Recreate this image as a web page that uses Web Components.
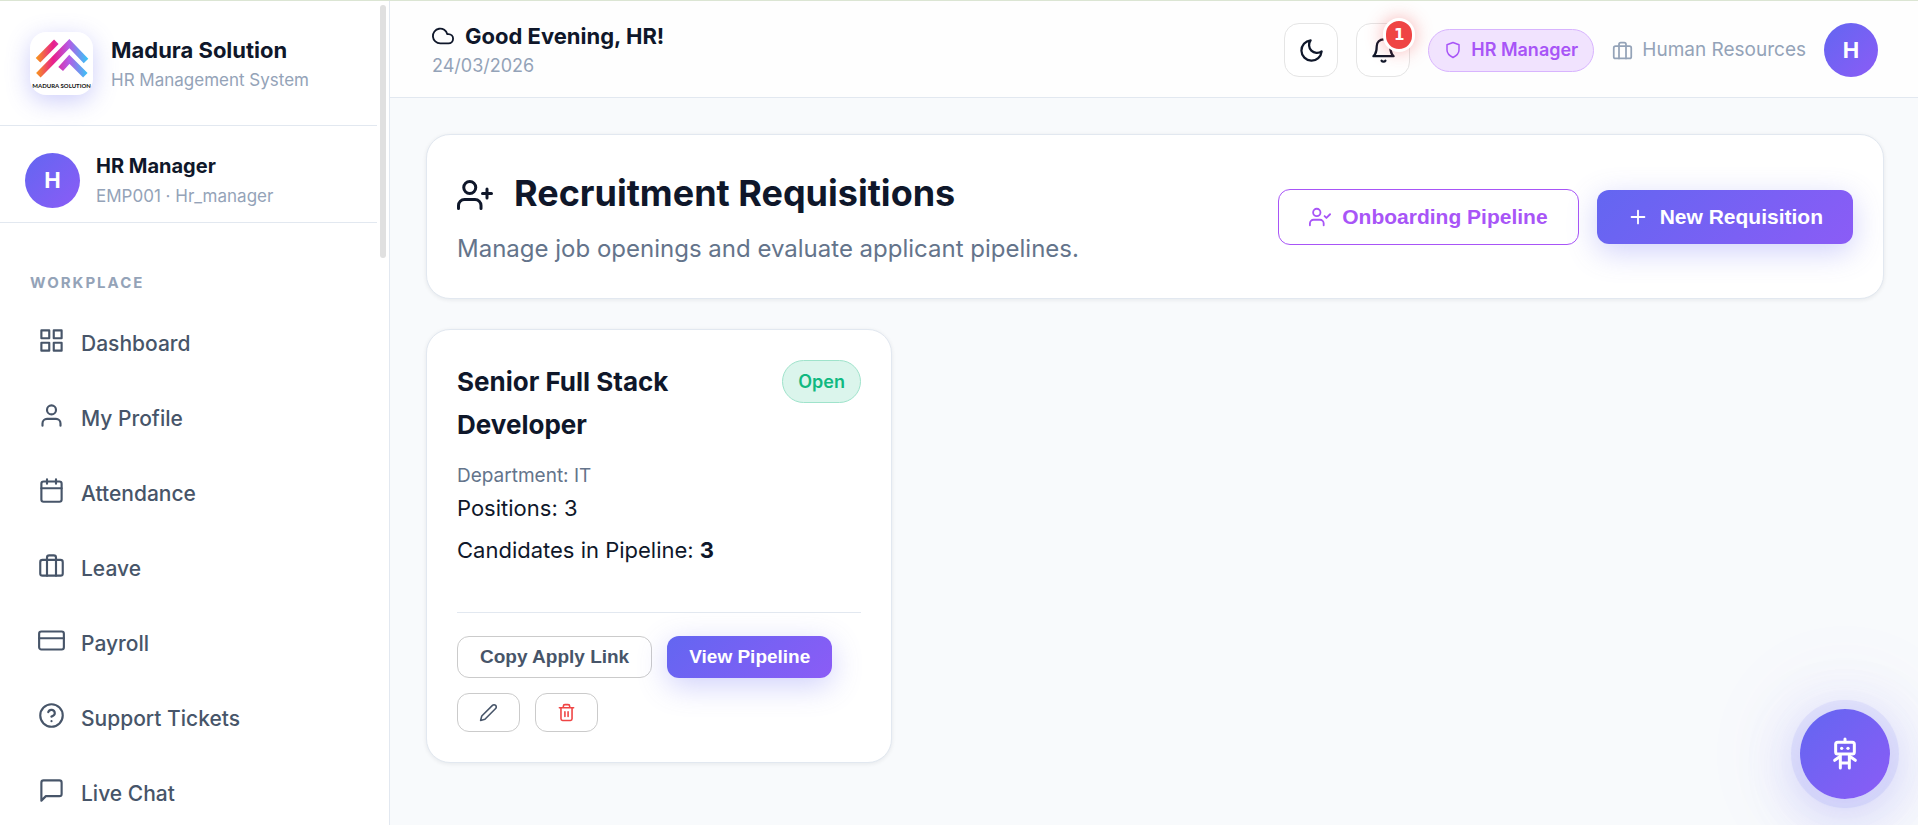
<!DOCTYPE html>
<html lang="en">
<head>
<meta charset="utf-8">
<meta name="viewport" content="width=device-width, initial-scale=1">
<title>Recruitment Requisitions – Madura Solution</title>
<style>
  :root {
    --ink: #0f172a;
    --slate: #475569;
    --muted: #64748b;
    --faint: #94a3b8;
    --line: #e2e8f0;
    --violet: #a855f7;
    --brand: linear-gradient(135deg, #6366f1, #8b5cf6);
  }
  body {
    margin: 0;
    color: var(--ink);
    background: #f8fafc;
    font-family: Inter, "Liberation Sans", sans-serif;
  }
</style>
</head>
<body>
<app-shell>
  <side-bar slot="side"></side-bar>
  <top-bar slot="top"></top-bar>
  <page-header>
    <ui-icon slot="icon" name="user-plus" style="--size:36px"></ui-icon>
    <span slot="title">Recruitment Requisitions</span>
    <span slot="subtitle">Manage job openings and evaluate applicant pipelines.</span>
    <ui-button slot="actions" variant="outline" size="large" icon="user-check">Onboarding Pipeline</ui-button>
    <ui-button slot="actions" variant="primary" size="large" icon="plus">New Requisition</ui-button>
  </page-header>
  <card-grid>
    <requisition-card>
      <span slot="title">Senior Full Stack Developer</span>
      <ui-pill slot="status" tone="green">Open</ui-pill>
      <span slot="department">Department: IT</span>
      <span slot="positions">Positions: 3</span>
      <span slot="candidates">Candidates in Pipeline: <b>3</b></span>
    </requisition-card>
  </card-grid>
  <chat-launcher slot="float"></chat-launcher>
</app-shell>

<script>
const ICONS = {
  grid: '<rect x="3" y="3" width="7" height="7"/><rect x="14" y="3" width="7" height="7"/><rect x="14" y="14" width="7" height="7"/><rect x="3" y="14" width="7" height="7"/>',
  user: '<path d="M20 21v-2a4 4 0 0 0-4-4H8a4 4 0 0 0-4 4v2"/><circle cx="12" cy="7" r="4"/>',
  calendar: '<rect x="3" y="4" width="18" height="18" rx="2"/><path d="M16 2v4M8 2v4M3 10h18"/>',
  briefcase: '<rect x="2" y="7" width="20" height="14" rx="2"/><path d="M16 21V5a2 2 0 0 0-2-2h-4a2 2 0 0 0-2 2v16"/>',
  card: '<rect x="1" y="4" width="22" height="16" rx="2"/><path d="M1 10h22"/>',
  help: '<circle cx="12" cy="12" r="10"/><path d="M9.09 9a3 3 0 0 1 5.83 1c0 2-3 3-3 3M12 17h.01"/>',
  message: '<path d="M21 15a2 2 0 0 1-2 2H7l-4 4V5a2 2 0 0 1 2-2h14a2 2 0 0 1 2 2z"/>',
  cloud: '<path d="M18 10h-1.26A8 8 0 1 0 9 20h9a5 5 0 0 0 0-10z"/>',
  moon: '<path d="M21 12.79A9 9 0 1 1 11.21 3 7 7 0 0 0 21 12.79z"/>',
  bell: '<path d="M18 8A6 6 0 0 0 6 8c0 7-3 9-3 9h18s-3-2-3-9M13.73 21a2 2 0 0 1-3.46 0"/>',
  shield: '<path d="M12 22s8-4 8-10V5l-8-3-8 3v7c0 6 8 10 8 10z"/>',
  plus: '<path d="M12 5v14M5 12h14"/>',
  'user-plus': '<path d="M16 21v-2a4 4 0 0 0-4-4H5a4 4 0 0 0-4 4v2"/><circle cx="8.5" cy="7" r="4"/><path d="M20 8v6M23 11h-6"/>',
  'user-check': '<path d="M16 21v-2a4 4 0 0 0-4-4H5a4 4 0 0 0-4 4v2"/><circle cx="8.5" cy="7" r="4"/><path d="M17 11l2 2 4-4"/>',
  edit: '<path d="M17 3a2.828 2.828 0 1 1 4 4L7.5 20.5 2 22l1.5-5.5L17 3z"/>',
  trash: '<path d="M3 6h18M19 6v14a2 2 0 0 1-2 2H7a2 2 0 0 1-2-2V6m3 0V4a2 2 0 0 1 2-2h4a2 2 0 0 1 2 2v2M10 11v6M14 11v6"/>'
};

function define(name, html, setup) {
  const template = document.createElement('template');
  template.innerHTML = html;
  customElements.define(name, class extends HTMLElement {
    constructor() {
      super();
      this.attachShadow({ mode: 'open' }).append(template.content.cloneNode(true));
    }
    connectedCallback() {
      if (setup) setup(this, this.shadowRoot);
    }
  });
}

define('ui-icon', `
<style>
  :host { display: inline-block; flex: none; width: var(--size, 24px); height: var(--size, 24px); }
  svg { display: block; width: 100%; height: 100%; overflow: visible; fill: none; stroke: currentColor;
        stroke-width: var(--stroke, 2); stroke-linecap: round; stroke-linejoin: round; }
</style>
<svg viewBox="0 0 24 24" aria-hidden="true"></svg>`,
(el, root) => { root.querySelector('svg').innerHTML = ICONS[el.getAttribute('name')]; });

define('user-avatar', `
<style>
  :host { display: flex; flex: none; align-items: center; justify-content: center; width: var(--size, 54px);
          height: var(--size, 54px); border-radius: 50%; background: var(--brand); color: #fff;
          font-size: 22px; line-height: 30px; font-weight: 700; }
</style>
<slot></slot>`);

define('ui-pill', `
<style>
  :host { display: inline-flex; flex: none; align-items: center; gap: 9px; box-sizing: border-box; height: 43px;
          padding: 0 15px; border: 1px solid #d8b4fe; border-radius: 22px; background: #f1e3fe;
          color: var(--violet); font-size: 18px; line-height: 28px; font-weight: 600; white-space: nowrap; }
  :host([tone="green"]) { color: #10b981; background: #dbf5ec; border-color: #9fe3cb; }
</style>
<slot></slot>`);

define('ui-button', `
<style>
  :host { display: inline-block; flex: none; }
  button { display: flex; align-items: center; justify-content: center; gap: 11px; box-sizing: border-box;
           margin: 0; padding: 8px 22px; border: 1px solid #cbcbcb; border-radius: 12px; background: transparent;
           color: var(--slate); font: 700 19px/24px "Liberation Sans", Arial, sans-serif; white-space: nowrap; cursor: pointer;
           width: 100%; min-height: 42px; }
  ui-icon { --size: 22px; }
  .primary { border: 0; color: #fff; background: var(--brand); box-shadow: 0 8px 30px rgba(99, 102, 241, .3); }
  .outline { border-color: var(--violet); color: var(--violet); background: #fff; }
  .large { padding: 15px 30px; font-size: 21px; }
  .icon-only { padding: 9px 21px; min-height: 39px; }
  .icon-only ui-icon { --size: 19px; }
  .danger { color: #ef4444; }
</style>
<button type="button"><slot></slot></button>`,
(el, root) => {
  const button = root.querySelector('button');
  for (const key of ['variant', 'size', 'tone']) {
    if (el.hasAttribute(key)) button.classList.add(el.getAttribute(key));
  }
  if (el.hasAttribute('label')) button.setAttribute('aria-label', el.getAttribute('label'));
  if (el.hasAttribute('icon') && !root.querySelector('ui-icon')) {
    const icon = document.createElement('ui-icon');
    icon.setAttribute('name', el.getAttribute('icon'));
    button.prepend(icon);
  }
});

define('nav-item', `
<style>
  :host { display: block; }
  a { display: flex; align-items: center; gap: 16px; height: 75px; padding: 0 38px; color: var(--slate);
      font-size: 21px; line-height: 32px; font-weight: 500; text-decoration: none; }
  ui-icon { --size: 27px; --stroke: 1.9; padding-bottom: 7px; }
</style>
<a href="#"><ui-icon></ui-icon><slot></slot></a>`,
(el, root) => {
  const old = root.querySelector('ui-icon');
  const icon = document.createElement('ui-icon');
  icon.setAttribute('name', el.getAttribute('icon'));
  old.replaceWith(icon);
});

define('brand-logo', `
<style>
  :host { display: block; flex: none; width: 63px; height: 63px; border-radius: 16px; background: #fff;
          box-shadow: 0 6px 24px rgba(99, 102, 241, .32); overflow: hidden; }
  svg { display: block; width: 100%; height: 100%; }
  text { font: 700 18px Lato, sans-serif; fill: #111; text-anchor: middle; }
</style>
<svg viewBox="0 0 189 189" role="img" aria-label="Madura Solution logo">
  <defs>
    <linearGradient id="warm" gradientUnits="userSpaceOnUse" x1="20" y1="0" x2="175" y2="0">
      <stop offset="0" stop-color="#f7931e"/><stop offset=".32" stop-color="#e91e8c"/>
      <stop offset=".62" stop-color="#b55ae6"/><stop offset="1" stop-color="#33c9f7"/>
    </linearGradient>
  </defs>
  <g fill="none" stroke="url(#warm)" stroke-width="19">
    <path d="M24 85L79 29"/>
    <path d="M25 130L118 35L168 87"/>
    <path d="M92 111L118 82L166 130"/>
  </g>
  <text x="95" y="168">MADURA SOLUTION</text>
</svg>`);

define('side-bar', `
<style>
  :host { display: grid; grid-template-columns: 1fr 12px; box-sizing: border-box; height: 100%; min-height: 0;
          border-right: 1px solid var(--line); background: #fff; }
  .body { min-width: 0; overflow-y: auto; scrollbar-width: none; }
  .brand, .person { display: flex; align-items: center; border-bottom: 1px solid var(--line); }
  .brand { gap: 18px; padding: 31px 30px 30px; }
  .person { gap: 16px; padding: 24px 25px 12px; }
  p { margin: 0; }
  .name { font-size: 22px; line-height: 32px; font-weight: 700; }
  .person .name { font-size: 20px; }
  .sub { color: var(--faint); font-size: 17px; line-height: 28px; }
  h2 { margin: 0; padding: 48px 30px 11px; color: var(--faint); font-size: 15px; line-height: 24px;
       font-weight: 700; letter-spacing: 2px; }
  .track { padding: 4px 3px; }
  .thumb { width: 6px; height: 31%; border-radius: 3px; background: #e0e0e0; }
</style>
<div class="body">
  <div class="brand">
    <brand-logo></brand-logo>
    <div><p class="name">Madura Solution</p><p class="sub">HR Management System</p></div>
  </div>
  <div class="person">
    <user-avatar style="--size:55px">H</user-avatar>
    <div><p class="name">HR Manager</p><p class="sub">EMP001 · Hr_manager</p></div>
  </div>
  <nav>
    <h2>WORKPLACE</h2>
    <nav-item icon="grid">Dashboard</nav-item>
    <nav-item icon="user">My Profile</nav-item>
    <nav-item icon="calendar">Attendance</nav-item>
    <nav-item icon="briefcase">Leave</nav-item>
    <nav-item icon="card">Payroll</nav-item>
    <nav-item icon="help">Support Tickets</nav-item>
    <nav-item icon="message">Live Chat</nav-item>
  </nav>
</div>
<div class="track"><div class="thumb"></div></div>`);

define('tool-button', `
<style>
  :host { display: block; position: relative; flex: none; }
  button { display: flex; align-items: center; justify-content: center; box-sizing: border-box; width: 54px; height: 54px;
           margin: 0; padding: 0; border: 1px solid #e5e5e5; border-radius: 15px; background: #fff; color: var(--ink); cursor: pointer; }
  ui-icon { --size: 27px; }
  slot::slotted(*) { position: absolute; top: -5px; right: -5px; box-sizing: border-box; min-width: 32px; height: 34px; padding: 0 6px;
           border: 3px solid #fff; border-radius: 17px; background: #ef4444; color: #fff; text-align: center;
           font: 700 15px/28px "DejaVu Sans", sans-serif; box-shadow: 0 0 18px rgba(239, 68, 68, .4); }
</style>
<button type="button"></button><slot></slot>`,
(el, root) => {
  const button = root.querySelector('button');
  button.setAttribute('aria-label', el.getAttribute('label'));
  const icon = document.createElement('ui-icon');
  icon.setAttribute('name', el.getAttribute('icon'));
  button.replaceChildren(icon);
});

define('top-bar', `
<style>
  :host { display: flex; align-items: center; justify-content: space-between; gap: 18px;
          padding: 22px 40px 20px 42px; border-bottom: 1px solid var(--line); background: #fefefe; }
  .row, .tools { display: flex; align-items: center; }
  .row { gap: 11px; font-size: 22px; line-height: 30px; font-weight: 700; }
  .hello { margin: -4px 0; padding-top: 2px; }
  .date { color: var(--faint); font-size: 18px; line-height: 30px; }
  .tools { gap: 18px; }
  .dept { display: flex; align-items: center; gap: 9px; color: var(--faint); font-size: 19px; line-height: 30px; }
</style>
<div class="hello">
  <div class="row"><ui-icon name="cloud" style="--size:22px"></ui-icon>Good Evening, HR!</div>
  <div class="date">24/03/2026</div>
</div>
<div class="tools">
  <tool-button icon="moon" label="Toggle theme"></tool-button>
  <tool-button icon="bell" label="Notifications"><span>1</span></tool-button>
  <ui-pill><ui-icon name="shield" style="--size:18px"></ui-icon>HR Manager</ui-pill>
  <div class="dept"><ui-icon name="briefcase" style="--size:21px"></ui-icon>Human Resources</div>
  <user-avatar>H</user-avatar>
</div>`);

define('ui-card', `
<style>
  :host { display: block; box-sizing: border-box; padding: 30px; border: 1px solid var(--line); border-radius: 24px;
          background: #fff; box-shadow: 0 1px 4px rgba(15, 23, 42, .08); }
</style>
<slot></slot>`);

define('page-header', `
<style>
  :host { display: block; }
  .row { display: flex; align-items: center; justify-content: space-between; gap: 30px; }
  h1 { display: flex; align-items: center; gap: 21px; margin: 0; font-size: 36px; line-height: 56px; font-weight: 700; }
  .sub { margin: 9px 0 0; color: var(--muted); font-size: 24px; line-height: 38px; }
  slot[name="icon"]::slotted(*) { padding-top: 4px; }
  .actions { display: flex; align-items: center; gap: 18px; }
</style>
<ui-card><div class="row">
  <div>
    <h1><slot name="icon"></slot><slot name="title"></slot></h1>
    <p class="sub"><slot name="subtitle"></slot></p>
  </div>
  <div class="actions"><slot name="actions"></slot></div>
</div></ui-card>`);

define('card-grid', `
<style>
  :host { display: grid; grid-template-columns: repeat(auto-fill, minmax(420px, 1fr)); gap: 30px; }
</style>
<slot></slot>`);

define('requisition-card', `
<style>
  :host { display: block; }
  .top { display: flex; align-items: flex-start; justify-content: space-between; gap: 15px; }
  h3 { margin: 0; font-size: 26px; line-height: 43px; font-weight: 700; }
  p { margin: 0; font-size: 22px; line-height: 34px; }
  .dept { margin-top: 14px; color: var(--muted); font-size: 19px; line-height: 31px; }
  .count { margin-top: 8px; }
  .actions { display: flex; flex-wrap: wrap; gap: 15px; margin-top: 45px; padding-top: 23px; border-top: 1px solid var(--line); }
</style>
<ui-card>
  <div class="top"><h3><slot name="title"></slot></h3><slot name="status"></slot></div>
  <p class="dept"><slot name="department"></slot></p>
  <p><slot name="positions"></slot></p>
  <p class="count"><slot name="candidates"></slot></p>
  <div class="actions">
    <ui-button>Copy Apply Link</ui-button>
    <ui-button variant="primary">View Pipeline</ui-button>
    <ui-button size="icon-only" icon="edit" label="Edit requisition"></ui-button>
    <ui-button size="icon-only" icon="trash" tone="danger" label="Delete requisition"></ui-button>
  </div>
</ui-card>`);

define('chat-launcher', `
<style>
  :host { position: fixed; right: 28px; bottom: 26px; }
  button { display: flex; align-items: center; justify-content: center; width: 90px; height: 90px; margin: 0; padding: 0;
           border: 0; border-radius: 50%; background: var(--brand); cursor: pointer;
           box-shadow: 0 0 0 9px rgba(99, 102, 241, .1), 0 12px 60px rgba(99, 102, 241, .35), 0 0 90px 30px rgba(139, 92, 246, .05); }
  svg { display: block; width: 30px; height: 36px; fill: none; stroke: #fff; stroke-width: 9; stroke-linecap: round; stroke-linejoin: round; }
</style>
<button type="button" aria-label="Open assistant">
  <svg viewBox="390 332 90 108" aria-hidden="true">
    <rect x="407" y="351" width="56" height="35" rx="6"/>
    <path d="M435 341v8M421 388v40M448 388v40M421 413h27M418 395l-14 10M452 395l14 10"/>
    <g fill="#fff" stroke="none"><circle cx="425" cy="369" r="5"/><circle cx="444" cy="369" r="5"/></g>
  </svg>
</button>`);

define('app-shell', `
<style>
  :host { display: grid; grid-template-columns: 390px minmax(0, 1fr); box-sizing: border-box; height: 100vh;
          border-top: 1px solid #dbe5d3; overflow: hidden; }
  .side { min-height: 0; }
  .page { min-width: 0; overflow-y: auto; scrollbar-width: none; }
  main { display: flex; flex-direction: column; gap: 30px; padding: 36px 34px 36px 36px; }
</style>
<div class="side"><slot name="side"></slot></div>
<div class="page"><slot name="top"></slot><main><slot></slot></main></div>
<slot name="float"></slot>`);
</script>
</body>
</html>
